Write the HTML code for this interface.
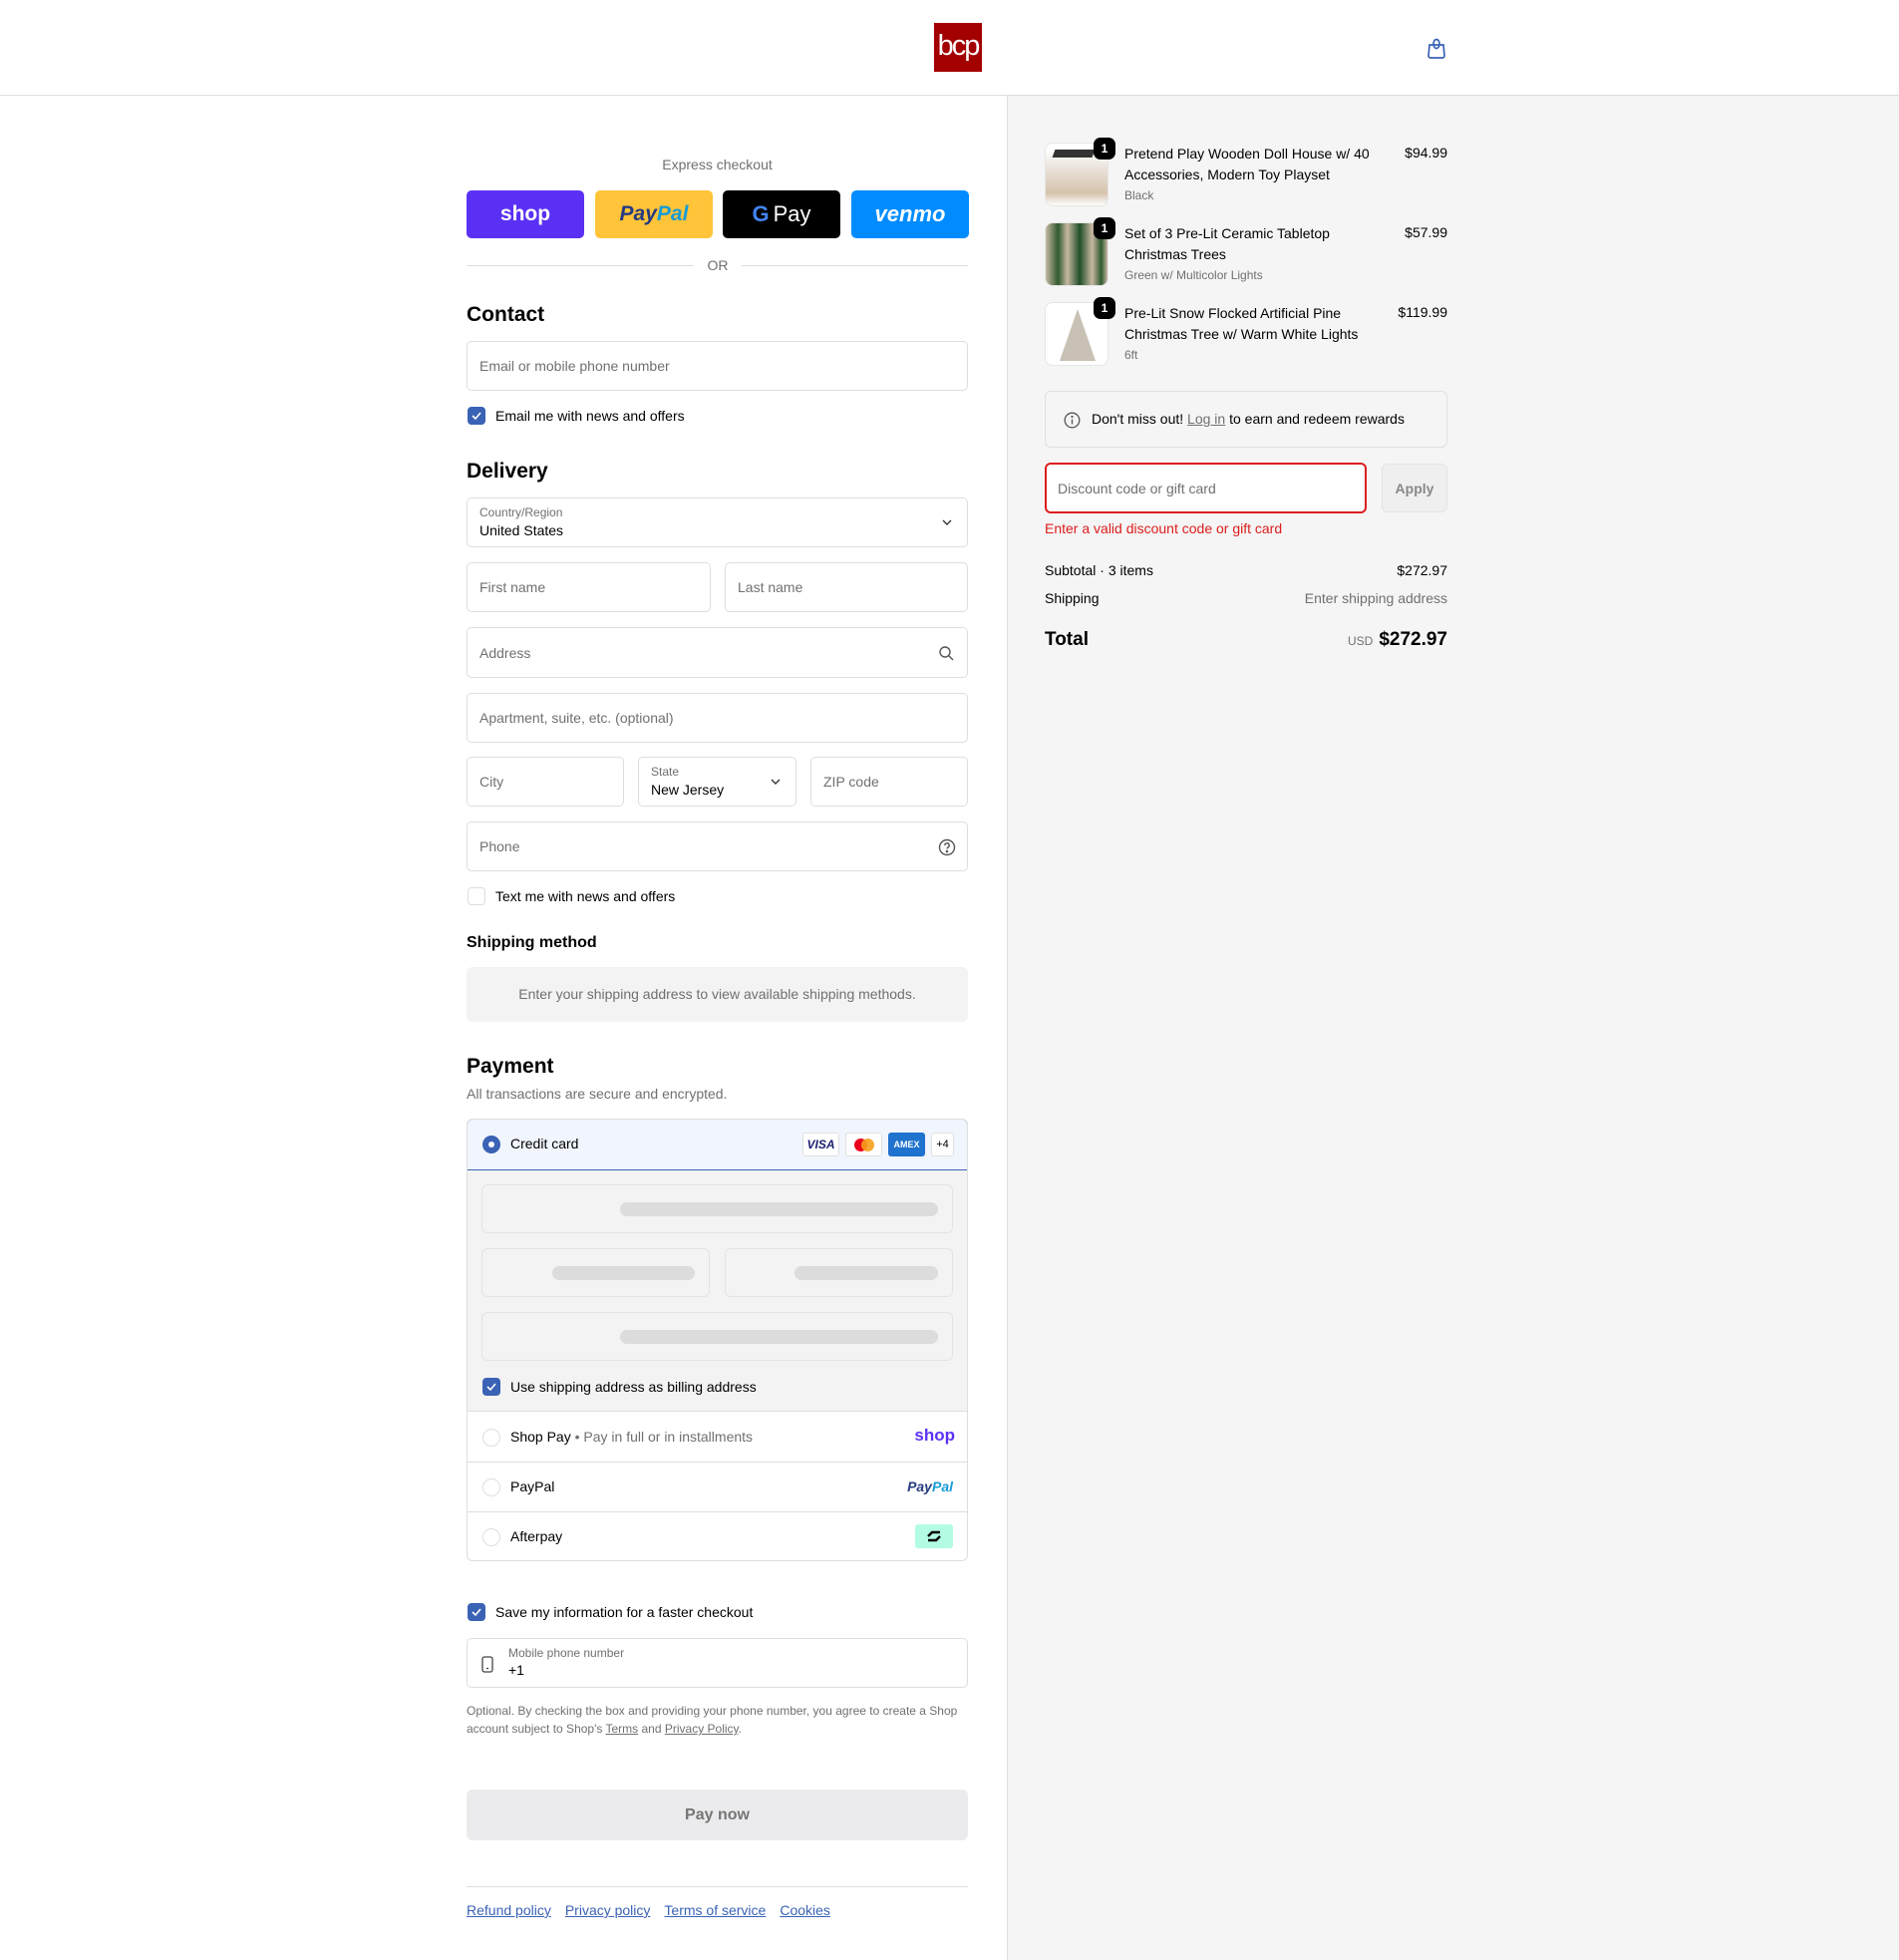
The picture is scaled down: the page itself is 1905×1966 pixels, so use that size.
<!DOCTYPE html>
<html><head><meta charset="utf-8"><style>
*{box-sizing:border-box;margin:0;padding:0}
body{width:1905px;height:1966px;position:relative;font-family:"Liberation Sans",Arial,sans-serif;font-size:14px;color:#000;background:#fff;overflow:hidden}
.a{position:absolute}
.f{position:absolute;border:1px solid #dedede;border-radius:5px;background:#fff}
.ph{position:absolute;left:12px;top:50%;transform:translateY(-50%);color:#707070;font-size:14px}
.lbl{position:absolute;left:12px;top:7px;font-size:12px;color:#707070}
.val{position:absolute;left:12px;top:24px;font-size:14px;color:#000}
.cb{position:absolute;width:18px;height:18px;border-radius:4px;background:#3a62b5}
.cb svg{position:absolute;left:3px;top:3px}
.h2{position:absolute;font-size:21px;font-weight:bold}
.btn{position:absolute;top:191px;height:48px;width:118px;border-radius:5px;display:flex;align-items:center;justify-content:center}
.sk{position:absolute;border:1px solid #e3e3e3;border-radius:6px;background:#f3f3f3}
.bar{position:absolute;height:14px;border-radius:7px;background:#dcdcdc}
.radio{position:absolute;left:15px;width:18px;height:18px;border-radius:50%;border:1px solid #dedede;background:#fff}
.thumb{position:absolute;left:1048px;width:64px;height:64px;border-radius:8px;background:#fff;border:1px solid #e6e6e6;overflow:hidden}
.badge{position:absolute;left:1097px;width:22px;height:22px;border-radius:7px;background:#000;color:#fff;font-size:12px;font-weight:bold;text-align:center;line-height:22px}
.it{position:absolute;left:1128px;width:250px;line-height:21px;font-size:14px}
.it small{display:block;font-size:12px;color:#707070;line-height:20px}
.pr{position:absolute;right:453px;font-size:14px}
</style></head><body>
<div class="a" style="left:0;top:95px;width:1905px;height:1px;background:#dedede"></div>
<div class="a" style="left:937px;top:23px;width:48px;height:49px;background:#a30000;color:#fff;font-size:29px;letter-spacing:-2px;line-height:46px;text-align:center;font-family:'Liberation Sans',sans-serif">bcp</div>
<svg class="a" style="left:1430px;top:36px" width="22" height="24" viewBox="0 0 22 24" fill="none" stroke="#3a62b5" stroke-width="1.7"><path d="M4 9h14l1 11a2 2 0 0 1-2 2H5a2 2 0 0 1-2-2z"/><ellipse cx="11" cy="8" rx="3" ry="4.5"/></svg>
<div class="a" style="left:1010px;top:96px;width:895px;height:1870px;background:#f5f5f5;border-left:1px solid #dedede"></div>

<div class="a" style="left:468px;top:157px;width:503px;text-align:center;color:#707070;font-size:14px">Express checkout</div>
<div class="btn" style="left:468px;background:#5a31f4;color:#fff;font-weight:bold;font-size:21px">shop</div>
<div class="btn" style="left:597px;background:#ffc439;font-style:italic;font-weight:bold;font-size:21px"><span style="color:#253b80">Pay</span><span style="color:#179bd7">Pal</span></div>
<div class="btn" style="left:725px;background:#000;color:#fff;font-size:22px"><b style="color:#4285f4;margin-right:4px">G</b>Pay</div>
<div class="btn" style="left:854px;background:#008cff;color:#fff;font-style:italic;font-weight:bold;font-size:22px">venmo</div>
<div class="a" style="left:468px;top:266px;width:228px;height:1px;background:#dedede"></div>
<div class="a" style="left:744px;top:266px;width:227px;height:1px;background:#dedede"></div>
<div class="a" style="left:696px;top:258px;width:48px;text-align:center;color:#707070">OR</div>

<div class="h2" style="left:468px;top:304px">Contact</div>
<div class="f" style="left:468px;top:342px;width:503px;height:50px"><span class="ph">Email or mobile phone number</span></div>
<div class="cb" style="left:469px;top:408px"><svg width="12" height="12" viewBox="0 0 12 12" fill="none" stroke="#fff" stroke-width="1.6"><path d="M2 6l3 3 5-6"/></svg></div>
<div class="a" style="left:497px;top:409px">Email me with news and offers</div>

<div class="h2" style="left:468px;top:461px">Delivery</div>
<div class="f" style="left:468px;top:499px;width:503px;height:50px"><span class="lbl">Country/Region</span><span class="val">United States</span>
<svg class="a" style="right:15px;top:20px" width="10" height="8" viewBox="0 0 10 8" fill="none" stroke="#333" stroke-width="1.4"><path d="M1 2l4 4 4-4"/></svg></div>
<div class="f" style="left:468px;top:564px;width:245px;height:50px"><span class="ph">First name</span></div>
<div class="f" style="left:727px;top:564px;width:244px;height:50px"><span class="ph">Last name</span></div>
<div class="f" style="left:468px;top:629px;width:503px;height:51px"><span class="ph">Address</span>
<svg class="a" style="right:13px;top:17px" width="16" height="16" viewBox="0 0 16 16" fill="none" stroke="#555" stroke-width="1.4"><circle cx="7" cy="7" r="5"/><path d="M11 11l4 4"/></svg></div>
<div class="f" style="left:468px;top:695px;width:503px;height:50px"><span class="ph">Apartment, suite, etc. (optional)</span></div>
<div class="f" style="left:468px;top:759px;width:158px;height:50px"><span class="ph">City</span></div>
<div class="f" style="left:640px;top:759px;width:159px;height:50px"><span class="lbl">State</span><span class="val">New Jersey</span>
<svg class="a" style="right:15px;top:20px" width="10" height="8" viewBox="0 0 10 8" fill="none" stroke="#333" stroke-width="1.4"><path d="M1 2l4 4 4-4"/></svg></div>
<div class="f" style="left:813px;top:759px;width:158px;height:50px"><span class="ph">ZIP code</span></div>
<div class="f" style="left:468px;top:824px;width:503px;height:50px"><span class="ph">Phone</span>
<svg class="a" style="right:11px;top:16px" width="18" height="18" viewBox="0 0 18 18" fill="none" stroke="#555" stroke-width="1.4"><circle cx="9" cy="9" r="7.5"/><path d="M6.8 7a2.2 2.2 0 1 1 3 2c-.6.3-.8.7-.8 1.5"/><circle cx="9" cy="13" r=".6" fill="#555"/></svg></div>
<div class="a" style="left:469px;top:890px;width:18px;height:18px;border:1px solid #dedede;border-radius:4px"></div>
<div class="a" style="left:497px;top:891px">Text me with news and offers</div>

<div class="a" style="left:468px;top:937px;font-size:16px;font-weight:bold">Shipping method</div>
<div class="a" style="left:468px;top:970px;width:503px;height:55px;background:#f3f3f3;border-radius:6px;text-align:center;line-height:55px;color:#707070">Enter your shipping address to view available shipping methods.</div>

<div class="h2" style="left:468px;top:1058px">Payment</div>
<div class="a" style="left:468px;top:1089px;color:#707070">All transactions are secure and encrypted.</div>
<div class="a" style="left:468px;top:1122px;width:503px;height:444px;border:1px solid #dedede;border-radius:6px;overflow:hidden">
  <div class="a" style="left:-1px;top:-1px;width:503px;height:52px;border:1px solid #3a62b5;border-radius:6px 6px 0 0;background:#f1f5fd"></div>
  <div class="a" style="left:15px;top:16px;width:18px;height:18px;border-radius:50%;background:#3a62b5"><div class="a" style="left:6px;top:6px;width:6px;height:6px;border-radius:50%;background:#fff"></div></div>
  <div class="a" style="left:43px;top:16px">Credit card</div>
  <div class="a" style="left:336px;top:13px;width:37px;height:24px;background:#fff;border:1px solid #e0e0e0;border-radius:3px;text-align:center;font:italic bold 12px/22px 'Liberation Sans',sans-serif;color:#1a1f71">VISA</div>
  <div class="a" style="left:379px;top:13px;width:37px;height:24px;background:#fff;border:1px solid #e0e0e0;border-radius:3px"><div class="a" style="left:8px;top:5px;width:13px;height:13px;border-radius:50%;background:#eb001b"></div><div class="a" style="left:15px;top:5px;width:13px;height:13px;border-radius:50%;background:#f79e1b;opacity:.9"></div></div>
  <div class="a" style="left:422px;top:13px;width:37px;height:24px;background:#1f72cd;border-radius:3px;color:#fff;text-align:center;font:bold 9px/24px 'Liberation Sans',sans-serif">AMEX</div>
  <div class="a" style="left:465px;top:13px;width:23px;height:24px;background:#fff;border:1px solid #e0e0e0;border-radius:3px;text-align:center;font-size:11px;line-height:22px">+4</div>
  <div class="a" style="left:0;top:51px;width:503px;height:242px;background:#f3f3f3;border-bottom:1px solid #dedede"></div>
  <div class="sk" style="left:14px;top:65px;width:473px;height:49px"><div class="bar" style="left:138px;top:17px;width:319px"></div></div>
  <div class="sk" style="left:14px;top:129px;width:229px;height:49px"><div class="bar" style="left:70px;top:17px;width:143px"></div></div>
  <div class="sk" style="left:258px;top:129px;width:229px;height:49px"><div class="bar" style="left:69px;top:17px;width:144px"></div></div>
  <div class="sk" style="left:14px;top:193px;width:473px;height:49px"><div class="bar" style="left:138px;top:17px;width:319px"></div></div>
  <div class="cb" style="left:15px;top:259px"><svg width="12" height="12" viewBox="0 0 12 12" fill="none" stroke="#fff" stroke-width="1.6"><path d="M2 6l3 3 5-6"/></svg></div>
  <div class="a" style="left:43px;top:260px">Use shipping address as billing address</div>
  <div class="radio" style="top:310px"></div>
  <div class="a" style="left:43px;top:310px">Shop Pay <span style="color:#707070">• Pay in full or in installments</span></div>
  <div class="a" style="right:12px;top:307px;color:#5a31f4;font-weight:bold;font-size:17px">shop</div>
  <div class="a" style="left:0;top:343px;width:503px;height:1px;background:#dedede"></div>
  <div class="radio" style="top:360px"></div>
  <div class="a" style="left:43px;top:360px">PayPal</div>
  <div class="a" style="right:14px;top:360px;font-style:italic;font-weight:bold;font-size:14px"><span style="color:#253b80">Pay</span><span style="color:#179bd7">Pal</span></div>
  <div class="a" style="left:0;top:393px;width:503px;height:1px;background:#dedede"></div>
  <div class="radio" style="top:410px"></div>
  <div class="a" style="left:43px;top:410px">Afterpay</div>
  <div class="a" style="right:14px;top:406px;width:38px;height:24px;background:#b2fce4;border-radius:3px"><svg class="a" style="left:10px;top:3px" width="18" height="18" viewBox="0 0 18 18" fill="none" stroke="#000" stroke-width="2.4"><path d="M3 9l4-4h8M15 9l-4 4H3"/></svg></div>
</div>

<div class="cb" style="left:469px;top:1608px"><svg width="12" height="12" viewBox="0 0 12 12" fill="none" stroke="#fff" stroke-width="1.6"><path d="M2 6l3 3 5-6"/></svg></div>
<div class="a" style="left:497px;top:1609px">Save my information for a faster checkout</div>
<div class="f" style="left:468px;top:1643px;width:503px;height:50px">
  <svg class="a" style="left:14px;top:17px" width="12" height="17" viewBox="0 0 12 17" fill="none" stroke="#444" stroke-width="1.3"><rect x="1" y="1" width="10" height="15" rx="2"/><path d="M5 12.5h2"/></svg>
  <span class="a" style="left:41px;top:7px;font-size:12px;color:#707070">Mobile phone number</span><span class="a" style="left:41px;top:23px">+1</span></div>
<div class="a" style="left:468px;top:1707px;width:510px;font-size:12px;line-height:18px;color:#707070">Optional. By checking the box and providing your phone number, you agree to create a Shop account subject to Shop's <u>Terms</u> and <u>Privacy Policy</u>.</div>
<div class="a" style="left:468px;top:1795px;width:503px;height:51px;background:#ebebed;border-radius:6px;text-align:center;line-height:51px;font-size:16px;font-weight:bold;color:#757575">Pay now</div>
<div class="a" style="left:468px;top:1892px;width:503px;height:1px;background:#dedede"></div>
<div class="a" style="left:468px;top:1908px;color:#3a62b5;text-decoration:underline">
<span>Refund policy</span><span style="margin-left:14px">Privacy policy</span><span style="margin-left:14px">Terms of service</span><span style="margin-left:14px">Cookies</span></div>

<div class="thumb" style="top:143px;background:linear-gradient(#fff 10%,#e9e2da 40%,#d6c3ad 80%,#fff)"><div class="a" style="left:8px;top:6px;width:40px;height:8px;background:#333;transform:skewX(-20deg)"></div></div>
<div class="badge" style="top:138px">1</div>
<div class="it" style="top:144px">Pretend Play Wooden Doll House w/ 40 Accessories, Modern Toy Playset<small>Black</small></div>
<div class="pr" style="top:145px">$94.99</div>

<div class="thumb" style="top:223px;background:linear-gradient(90deg,#c9b9a5,#2e5a2e 20%,#c8b7a2 35%,#1f4f28 55%,#c8b7a2 75%,#2e5a2e 90%,#c9b9a5)"></div>
<div class="badge" style="top:218px">1</div>
<div class="it" style="top:224px">Set of 3 Pre-Lit Ceramic Tabletop Christmas Trees<small>Green w/ Multicolor Lights</small></div>
<div class="pr" style="top:225px">$57.99</div>

<div class="thumb" style="top:303px"><div class="a" style="left:14px;top:6px;width:0;height:0;border-left:18px solid transparent;border-right:18px solid transparent;border-bottom:52px solid #c9c1b5"></div></div>
<div class="badge" style="top:298px">1</div>
<div class="it" style="top:304px">Pre-Lit Snow Flocked Artificial Pine Christmas Tree w/ Warm White Lights<small>6ft</small></div>
<div class="pr" style="top:305px">$119.99</div>

<div class="a" style="left:1048px;top:392px;width:404px;height:57px;border:1px solid #e0e0e0;border-radius:6px">
  <svg class="a" style="left:18px;top:20px" width="17" height="17" viewBox="0 0 17 17" fill="none" stroke="#555" stroke-width="1.3"><circle cx="8.5" cy="8.5" r="7.3"/><path d="M8.5 7.5v5"/><circle cx="8.5" cy="5" r=".5" fill="#555"/></svg>
  <span class="a" style="left:46px;top:19px">Don't miss out! <u style="color:#707070">Log in</u> to earn and redeem rewards</span></div>
<div class="a" style="left:1048px;top:464px;width:323px;height:51px;border:2px solid #dd1d1d;border-radius:6px;background:#fff"><span class="ph" style="left:11px">Discount code or gift card</span></div>
<div class="a" style="left:1386px;top:465px;width:66px;height:49px;border:1px solid #e3e3e3;border-radius:6px;background:#efefef;text-align:center;line-height:49px;font-weight:bold;color:#888">Apply</div>
<div class="a" style="left:1048px;top:522px;color:#dd1d1d">Enter a valid discount code or gift card</div>
<div class="a" style="left:1048px;top:564px">Subtotal · 3 items</div>
<div class="pr" style="top:564px">$272.97</div>
<div class="a" style="left:1048px;top:592px">Shipping</div>
<div class="pr" style="top:592px;color:#707070">Enter shipping address</div>
<div class="a" style="left:1048px;top:631px;font-size:19px;font-weight:bold">Total</div>
<div class="pr" style="top:631px;font-size:19px;font-weight:bold"><span style="font-size:12px;font-weight:normal;color:#707070;margin-right:6px">USD</span>$272.97</div>
</body></html>
